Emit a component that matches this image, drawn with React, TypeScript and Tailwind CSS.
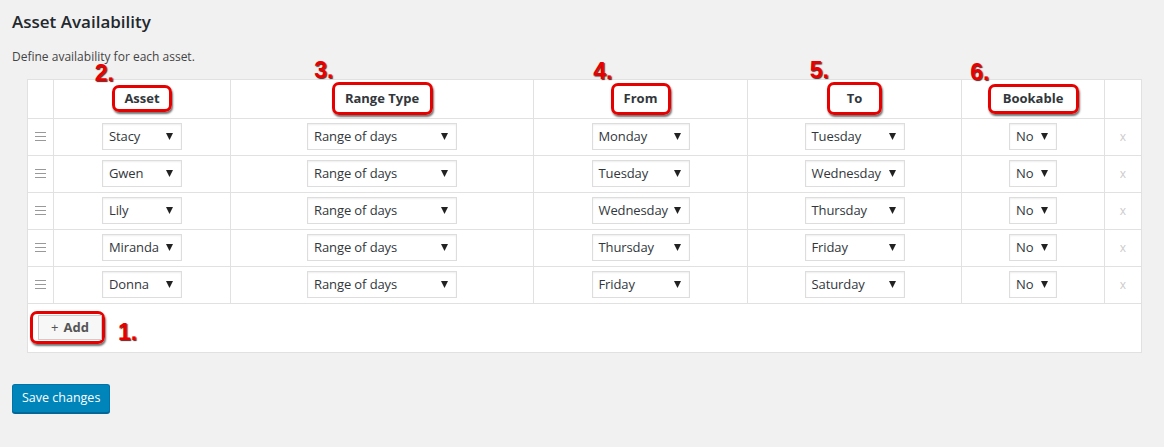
import React from 'react'

type Row = { asset: string; from: string; to: string }

const rows: Row[] = [
  { asset: 'Stacy', from: 'Monday', to: 'Tuesday' },
  { asset: 'Gwen', from: 'Tuesday', to: 'Wednesday' },
  { asset: 'Lily', from: 'Wednesday', to: 'Thursday' },
  { asset: 'Miranda', from: 'Thursday', to: 'Friday' },
  { asset: 'Donna', from: 'Friday', to: 'Saturday' },
]

function Select({ value, width }: { value: string; width: string }) {
  return (
    <div
      className={`mx-auto flex h-[27px] items-center justify-between border border-[#dddddd] bg-white pl-[6px] pr-[8px] text-[13px] text-[#32373c] shadow-[inset_0_1px_2px_rgba(0,0,0,0.07)] ${width}`}
    >
      <span className="leading-none tracking-[-0.1px]">{value}</span>
      <svg width="7" height="7" viewBox="0 0 7 7" className="ml-[4px] shrink-0">
        <path d="M0 0h7L3.5 7z" fill="#222" />
      </svg>
    </div>
  )
}

function Marker({ n, className = '' }: { n: string; className?: string }) {
  return (
    <span
      className={`absolute font-['Liberation_Sans',Arial,sans-serif] font-bold leading-[0.72] text-[#e80000] [text-shadow:1px_1px_1px_rgba(60,0,0,0.85)] ${className}`}
    >
      {n}
    </span>
  )
}

function HeadLabel({ label, n, box }: { label: string; n: string; box: string }) {
  return (
    <div className="relative mx-auto w-fit">
      <div
        className={`flex items-center justify-center rounded-[7px] border-[3px] border-[#e60000] text-[13px] font-bold text-[#32373c] shadow-[1px_2px_2px_rgba(0,0,0,0.55)] ${box}`}
      >
        {label}
      </div>
      <Marker n={n} className="bottom-full right-full -mr-[2px] mb-[3px] text-[23px]" />
    </div>
  )
}

function Handle() {
  return (
    <svg width="11" height="9" viewBox="0 0 11 9" className="mx-auto">
      <path d="M0 0.5h11M0 4.5h11M0 8.5h11" stroke="#999" strokeWidth="1" />
    </svg>
  )
}

export default function App() {
  return (
    <div className="min-h-[447px] bg-[#f1f1f1] px-3 pt-[9px] font-['Open_Sans','Noto_Sans',sans-serif] text-[#444]">
      <h2 className="text-[17px] font-semibold text-[#23282d]">Asset Availability</h2>
      <p className="mt-[14px] text-[12px] leading-[16px] text-[#444]">Define availability for each asset.</p>

      <table className="ml-[15px] mt-[14px] w-[1114px] table-fixed border-collapse border border-[#e1e1e1] bg-white">
        <colgroup>
          <col className="w-[26px]" />
          <col className="w-[177px]" />
          <col className="w-[303px]" />
          <col className="w-[214px]" />
          <col className="w-[214px]" />
          <col className="w-[143px]" />
          <col className="w-[37px]" />
        </colgroup>
        <thead>
          <tr className="h-[39px]">
            <th className="border border-[#e1e1e1]" />
            <th className="border border-[#e1e1e1]">
              <HeadLabel label="Asset" n="2." box="h-[27px] w-[60px]" />
            </th>
            <th className="border border-[#e1e1e1]">
              <HeadLabel label="Range Type" n="3." box="h-[33px] w-[101px]" />
            </th>
            <th className="border border-[#e1e1e1]">
              <HeadLabel label="From" n="4." box="h-[32px] w-[60px]" />
            </th>
            <th className="border border-[#e1e1e1]">
              <HeadLabel label="To" n="5." box="h-[33px] w-[55px]" />
            </th>
            <th className="border border-[#e1e1e1]">
              <HeadLabel label="Bookable" n="6." box="h-[30px] w-[91px]" />
            </th>
            <th className="border border-[#e1e1e1]" />
          </tr>
        </thead>
        <tbody>
          {rows.map(r => (
            <tr key={r.asset} className="h-[37px]">
              <td className="border border-[#e1e1e1]">
                <Handle />
              </td>
              <td className="border border-[#e1e1e1]">
                <Select value={r.asset} width="w-[80px]" />
              </td>
              <td className="border border-[#e1e1e1]">
                <Select value="Range of days" width="w-[150px]" />
              </td>
              <td className="border border-[#e1e1e1]">
                <Select value={r.from} width="w-[98px]" />
              </td>
              <td className="border border-[#e1e1e1]">
                <Select value={r.to} width="w-[100px]" />
              </td>
              <td className="border border-[#e1e1e1]">
                <Select value="No" width="w-[48px]" />
              </td>
              <td className="border border-[#e1e1e1] text-center text-[12px] text-[#cccccc]">x</td>
            </tr>
          ))}
        </tbody>
        <tfoot>
          <tr className="h-[49px]">
            <td colSpan={7} className="pl-[2px]">
              <div className="flex items-center">
                <div className="rounded-[7px] border-[3px] border-[#e60000] py-[1px] pl-[5px] pr-0 shadow-[1px_2px_2px_rgba(0,0,0,0.55)]">
                  <div className="flex h-[25px] w-[64px] items-center justify-center gap-[5px] border border-[#cccccc] bg-[#f7f7f7] text-[13px] font-bold text-[#555]">
                    <span className="font-normal">+</span>
                    <span>Add</span>
                  </div>
                </div>
                <span className="ml-[13px] mt-[10px] font-['Liberation_Sans',Arial,sans-serif] text-[23px] font-bold leading-none text-[#e80000] [text-shadow:1px_1px_1px_rgba(60,0,0,0.85)]">
                  1.
                </span>
              </div>
            </td>
          </tr>
        </tfoot>
      </table>

      <button className="mt-[31px] h-[29px] rounded-[3px] border border-[#0073aa] border-b-[#006799] bg-[#0085ba] px-[9px] text-[12.5px] text-white shadow-[0_1px_0_#006799]">
        Save changes
      </button>
    </div>
  )
}
